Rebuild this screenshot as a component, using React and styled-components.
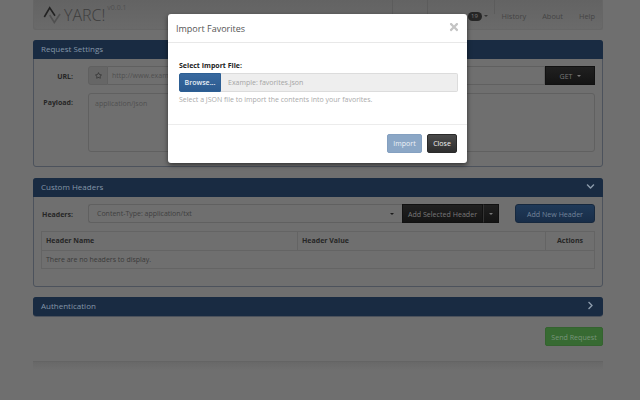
import React from 'react';
import styled, { createGlobalStyle } from 'styled-components';
import { FaChevronDown, FaChevronRight, FaRegStar, FaTimes } from 'react-icons/fa';

const Global = createGlobalStyle`
  html, body { margin: 0; padding: 0; height: 100%; background: #6f6f6f; overflow: hidden; }
  #root { height: 100%; }
  * { box-sizing: border-box; }
  body { font-family: "Open Sans", "Liberation Sans", sans-serif; font-size: 8px; color: #2b2b2b; }
`;

const Page = styled.div`
  position: relative;
  width: 640px;
  height: 400px;
  padding: 0 37px 0 33px;
  background: #6f6f6f;
  overflow: hidden;
`;

const Navbar = styled.header`
  height: 30px;
  display: flex;
  align-items: center;
  padding: 0 7px 0 9px;
  background: linear-gradient(#636363, #6a6a6a);
  border: 1px solid #666;
  border-top: 0;
  border-radius: 0 0 3px 3px;
`;

const Brand = styled.div`
  display: flex;
  align-items: center;
  gap: 3px;
  flex: 1;
`;

const BrandName = styled.span`
  font-size: 16px;
  font-weight: 300;
  color: #3c3c3c;
  line-height: 1;
`;

const Version = styled.span`
  font-size: 7px;
  color: #505050;
  align-self: flex-start;
  margin: -2px 0 0 -1px;
  line-height: 1;
`;

const NavList = styled.nav`
  display: flex;
  align-items: center;
  height: 100%;
`;

const NavItem = styled.a`
  display: flex;
  align-items: center;
  height: 100%;
  margin-left: ${p => p.$gap || 0}px;
  padding-top: 3px;
  font-size: 7.4px;
  color: ${p => (p.$strong ? '#161616' : '#444')};
  font-weight: ${p => (p.$strong ? 600 : 400)};
  white-space: nowrap;
`;

const NavDivider = styled.span`
  width: 1px;
  height: 14px;
  align-self: flex-start;
  flex: none;
  margin-left: ${p => p.$gap}px;
  background: #5c5c5c;
`;

const Badge = styled.span`
  width: 14px;
  height: 9px;
  border-radius: 5px;
  background: #262626;
  color: #7a7a7a;
  font-size: 6px;
  line-height: 9px;
  text-align: center;
`;

const Caret = styled.i`
  display: inline-block;
  width: 0;
  height: 0;
  border-left: 2px solid transparent;
  border-right: 2px solid transparent;
  border-top: 2px solid ${p => p.$color || '#333'};
  margin-left: ${p => p.$gap ?? 2}px;
`;

const Panel = styled.section`
  margin-top: ${p => p.$top}px;
  border: 1px solid #4c525c;
  border-radius: 3px;
  background: #6f6f6f;
`;

const PanelHeading = styled.div`
  height: 19px;
  margin: -1px -1px 0;
  padding: 0 8px 2px;
  display: flex;
  align-items: center;
  justify-content: space-between;
  background: #192b42;
  border-radius: ${p => (p.$closed ? '3px' : '3px 3px 0 0')};
  color: #8496a8;
  font-size: 8px;
  svg { color: #8c9bab; font-size: 9px; }
`;

const PanelBody = styled.div`
  padding: 7px 7px ${p => p.$bottom}px;
`;

const FormRow = styled.div`
  display: flex;
  align-items: ${p => (p.$top ? 'flex-start' : 'center')};
  margin-bottom: ${p => p.$mb || 0}px;
`;

const Label = styled.label`
  width: 32px;
  padding-top: ${p => p.$pt || 1}px;
  text-align: right;
  font-weight: 700;
  font-size: 7px;
  color: #262626;
  flex: none;
`;

const Field = styled.div`
  margin-left: 15px;
  flex: 1;
  display: flex;
  align-items: center;
  height: 19px;
  min-width: 0;
`;

const AddOn = styled.span`
  width: 20px;
  height: 19px;
  flex: none;
  display: flex;
  align-items: center;
  justify-content: center;
  background: #666;
  border: 1px solid #606060;
  border-radius: 3px 0 0 3px;
  color: #303030;
  font-size: 7px;
`;

const TextBox = styled.div`
  flex: 1;
  height: 19px;
  border: 1px solid #606060;
  border-left: 0;
  padding: 0 4px;
  display: flex;
  align-items: center;
  font-size: 7px;
  color: #505050;
`;

const DarkButton = styled.button`
  width: ${p => p.$w}px;
  height: 18.5px;
  flex: none;
  padding: 0;
  font: inherit;
  font-size: 7.1px;
  color: #787878;
  background: linear-gradient(#202020, #141414);
  border: 1px solid #111;
  display: flex;
  align-items: center;
  justify-content: center;
`;

const TextArea = styled.div`
  margin-left: 15px;
  flex: 1;
  height: 59px;
  border: 1px solid #606060;
  border-radius: 3px;
  padding: 5px 6px;
  font-size: 7px;
  color: #505050;
`;

const HeaderSelect = styled.div`
  flex: 1;
  height: 19px;
  border: 1px solid #606060;
  border-right: 0;
  border-radius: 3px 0 0 3px;
  padding: 0 8px;
  display: flex;
  align-items: center;
  justify-content: space-between;
  font-size: 7px;
  color: #404040;
`;

const SplitCaret = styled(DarkButton)`
  border-left: 1px solid #333;
`;

const BlueButton = styled.button`
  width: 80px;
  height: 18.5px;
  flex: none;
  margin-left: 16px;
  padding: 0;
  font: inherit;
  font-size: 7.1px;
  color: #72849a;
  background: linear-gradient(#1f3958, #182d48);
  border: 1px solid #16283e;
  border-radius: 3px;
`;

const Table = styled.div`
  margin-top: 8px;
  border: 1px solid #646464;
  display: grid;
  grid-template-columns: 255px 248px 1fr;
  font-size: 7px;
`;

const Th = styled.div`
  height: 19px;
  padding: 0 4px 1px;
  display: flex;
  align-items: center;
  justify-content: ${p => (p.$center ? 'center' : 'flex-start')};
  border-left: ${p => (p.$first ? '0' : '1px solid #646464')};
  border-bottom: 1px solid #646464;
  font-weight: 700;
  color: #262626;
`;

const Empty = styled.div`
  grid-column: 1 / -1;
  height: 17px;
  padding: 0 4px;
  display: flex;
  align-items: center;
  color: #3a3a3a;
`;

const Actions = styled.div`
  display: flex;
  justify-content: flex-end;
  margin-top: 10px;
`;

const SendButton = styled.button`
  width: 58px;
  height: 19px;
  padding: 0;
  font: inherit;
  font-size: 7.1px;
  color: #78947a;
  background: #376a32;
  border: 1px solid #34632f;
  border-radius: 2px;
`;

const Footer = styled.footer`
  margin-top: 15px;
  height: 9px;
  border-top: 1px solid #646464;
  background: linear-gradient(#686868, #6f6f6f);
`;

const Modal = styled.div`
  position: absolute;
  left: 168px;
  top: 14px;
  width: 299px;
  height: 149px;
  background: #fff;
  border-radius: 3px;
  box-shadow: 0 2px 5px rgba(0, 0, 0, 0.55);
  display: flex;
  flex-direction: column;
`;

const ModalHeader = styled.div`
  height: 29px;
  flex: none;
  padding: 0 8px;
  display: flex;
  align-items: center;
  justify-content: space-between;
  border-bottom: 1px solid #e8e8e8;
  font-size: 9px;
  color: #555;
`;

const CloseIcon = styled.span`
  display: flex;
  margin-top: -2px;
  margin-right: -1px;
  font-size: 12px;
  color: #c4c4c4;
`;

const ModalBody = styled.div`
  flex: 1;
  padding: 18px 9px 0 11px;
`;

const ModalLabel = styled.div`
  font-size: 7px;
  font-weight: 700;
  line-height: 10px;
  color: #222;
  margin-bottom: 2px;
`;

const FileRow = styled.div`
  display: flex;
  height: 19px;
`;

const BrowseButton = styled.button`
  width: 42px;
  flex: none;
  padding: 0;
  font: inherit;
  font-size: 7px;
  font-weight: 600;
  color: #e8eef5;
  background: linear-gradient(#38699f, #2c5b90);
  border: 1px solid #2d5f94;
  border-radius: 2px 0 0 2px;
`;

const FileInput = styled.div`
  flex: 1;
  padding: 0 7px;
  display: flex;
  align-items: center;
  font-size: 7px;
  color: #a4a4a4;
  background: #eeeeee;
  border: 1px solid #dcdcdc;
  border-left: 0;
  border-radius: 0 2px 2px 0;
`;

const Help = styled.div`
  margin-top: 3px;
  font-size: 7px;
  line-height: 10px;
  color: #aaaaaa;
`;

const ModalFooter = styled.div`
  height: 39px;
  flex: none;
  padding: 9px 10px 0 0;
  display: flex;
  justify-content: flex-end;
  gap: 5px;
  border-top: 1px solid #ececec;
`;

const ImportButton = styled.button`
  width: 35px;
  height: 19px;
  padding: 0;
  font: inherit;
  font-size: 7px;
  color: #eef2f7;
  background: #8ba7c6;
  border: 1px solid #84a0c0;
  border-radius: 2px;
`;

const CloseButton = styled.button`
  width: 30px;
  height: 19px;
  padding: 0;
  font: inherit;
  font-size: 7px;
  color: #f2f2f2;
  background: linear-gradient(#4a4a4a, #2e2e2e);
  border: 1px solid #2a2a2a;
  border-radius: 2px;
`;

const Logo = () => (
  <svg width="18" height="18" viewBox="0 0 18 18" fill="none">
    <path d="M1.3 11 L6.7 1.8 L12 9.7" stroke="#222" strokeWidth="1.6" />
    <path d="M6.7 9 L11.3 16.5 L17 8" stroke="#505050" strokeWidth="1.6" />
  </svg>
);

export default function App() {
  return (
    <Page>
      <Global />
      <Navbar>
        <Brand>
          <Logo />
          <BrandName>YARC!</BrandName>
          <Version>v0.0.1</Version>
        </Brand>
        <NavList>
          <NavItem $strong>Validator</NavItem>
          <NavItem $gap={10} $strong>REST Clients</NavItem>
          <NavDivider $gap={7} />
          <NavItem $gap={5} $strong>Utilities</NavItem>
          <NavDivider $gap={1} />
          <NavItem $gap={5} $strong>Favorites</NavItem>
          <NavItem $gap={2}><Badge>19</Badge><Caret /></NavItem>
          <NavDivider $gap={6} />
          <NavItem $gap={7}>History</NavItem>
          <NavItem $gap={16}>About</NavItem>
          <NavItem $gap={16}>Help</NavItem>
        </NavList>
      </Navbar>

      <Panel $top={10}>
        <PanelHeading>Request Settings</PanelHeading>
        <PanelBody $bottom={14}>
          <FormRow $mb={8}>
            <Label>URL:</Label>
            <Field>
              <AddOn><FaRegStar /></AddOn>
              <TextBox>http://www.example.com</TextBox>
              <DarkButton $w={50}>GET<Caret $color="#787878" $gap={4} /></DarkButton>
            </Field>
          </FormRow>
          <FormRow $top>
            <Label $pt={5}>Payload:</Label>
            <TextArea>application/json</TextArea>
          </FormRow>
        </PanelBody>
      </Panel>

      <Panel $top={11}>
        <PanelHeading>Custom Headers<FaChevronDown /></PanelHeading>
        <PanelBody $bottom={17}>
          <FormRow>
            <Label>Headers:</Label>
            <Field>
              <HeaderSelect>Content-Type: application/txt<Caret $color="#1c1c1c" /></HeaderSelect>
              <DarkButton $w={81}>Add Selected Header</DarkButton>
              <SplitCaret $w={16}><Caret $color="#787878" $gap={0} /></SplitCaret>
              <BlueButton>Add New Header</BlueButton>
            </Field>
          </FormRow>
          <Table>
            <Th $first>Header Name</Th>
            <Th>Header Value</Th>
            <Th $center>Actions</Th>
            <Empty>There are no headers to display.</Empty>
          </Table>
        </PanelBody>
      </Panel>

      <Panel $top={10}>
        <PanelHeading $closed>Authentication<FaChevronRight /></PanelHeading>
      </Panel>

      <Actions><SendButton>Send Request</SendButton></Actions>
      <Footer />

      <Modal>
        <ModalHeader>
          Import Favorites
          <CloseIcon><FaTimes /></CloseIcon>
        </ModalHeader>
        <ModalBody>
          <ModalLabel>Select Import File:</ModalLabel>
          <FileRow>
            <BrowseButton>Browse...</BrowseButton>
            <FileInput>Example: favorites.json</FileInput>
          </FileRow>
          <Help>Select a JSON file to import the contents into your favorites.</Help>
        </ModalBody>
        <ModalFooter>
          <ImportButton>Import</ImportButton>
          <CloseButton>Close</CloseButton>
        </ModalFooter>
      </Modal>
    </Page>
  );
}
